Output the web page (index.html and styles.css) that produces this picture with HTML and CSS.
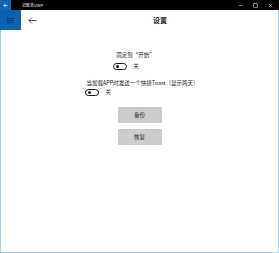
FILE: index.html
```html
<!DOCTYPE html>
<html lang="zh">
<head>
<meta charset="utf-8">
<title>记账本UWP</title>
<link rel="stylesheet" href="styles.css">
</head>
<body>
<div class="titlebar">
  <div class="tb-back">
    <svg width="5" height="5" viewBox="0 0 10 10"><path d="M9 5H1.5M5 1.5L1.5 5L5 8.5" stroke="#fff" stroke-width="1.4" fill="none"/></svg>
  </div>
  <div class="tb-title">记账本UWP</div>
  <div class="tb-controls">
    <svg width="5" height="5" viewBox="0 0 10 10"><path d="M1 5H9" stroke="#ddd" stroke-width="1"/></svg>
    <svg width="5" height="5" viewBox="0 0 10 10"><rect x="1.5" y="1.5" width="7" height="7" stroke="#ddd" stroke-width="1.2" fill="none"/></svg>
    <svg width="5" height="5" viewBox="0 0 10 10"><path d="M1.5 1.5L8.5 8.5M8.5 1.5L1.5 8.5" stroke="#ddd" stroke-width="1.2"/></svg>
  </div>
</div>
<div class="frame">
  <div class="header">
    <div class="hamburger">
      <svg width="7" height="5" viewBox="0 0 14 10"><path d="M0 1H14M0 5H14M0 9H14" stroke="#0b2a4a" stroke-width="1.4"/></svg>
    </div>
    <div class="back">
      <svg width="9" height="7" viewBox="0 0 18 14"><path d="M17 7H2M8 1L2 7L8 13" stroke="#222" stroke-width="1.5" fill="none"/></svg>
    </div>
    <div class="page-title">设置</div>
  </div>
  <div class="content">
    <div class="group group-1">
      <div class="label">固定到“开始”</div>
      <div class="toggle-row"><span class="toggle"><span class="knob"></span></span><span class="state">关</span></div>
    </div>
    <div class="group group-2">
      <div class="label">当加载APP时发送一个快捷Toast（显示两天）</div>
      <div class="toggle-row"><span class="toggle"><span class="knob"></span></span><span class="state">关</span></div>
    </div>
    <div class="buttons">
      <div class="btn">备份</div>
      <div class="btn">恢复</div>
    </div>
  </div>
</div>
</body>
</html>
```

FILE: styles.css
```css
html, body {
  margin: 0;
  padding: 0;
  background: #fff;
}
body {
  width: 279px;
  height: 253px;
  overflow: hidden;
  font-family: "Noto Sans CJK SC", "Noto Sans", sans-serif;
  color: #222;
}
.titlebar {
  height: 10px;
  background: #000;
  display: flex;
  align-items: center;
}
.tb-back {
  width: 11px;
  height: 10px;
  background: #1565b4;
  display: flex;
  align-items: center;
  justify-content: center;
}
.tb-title {
  margin-left: 11px;
  color: #fff;
  font-size: 4px;
  line-height: 10px;
  flex: 1;
}
.tb-controls {
  display: flex;
  gap: 10px;
  padding-right: 6px;
  align-items: center;
}
.tb-controls svg { display: block; }
.frame {
  height: 243px;
  box-sizing: border-box;
  border: 1px solid #a9cfec;
  border-top: none;
  display: flex;
  flex-direction: column;
}
.header {
  height: 20px;
  display: flex;
  align-items: center;
  margin-left: -1px;
}
.hamburger {
  width: 21px;
  height: 20px;
  background: #0c62b0;
  display: flex;
  align-items: center;
  justify-content: center;
}
.back {
  width: 22px;
  height: 20px;
  display: flex;
  align-items: center;
  justify-content: center;
}
.page-title {
  margin-left: 110px;
  font-size: 7px;
  font-weight: bold;
  line-height: 20px;
  color: #222;
}
.content {
  display: flex;
  flex-direction: column;
  align-items: center;
  padding-top: 22px;
}
.group {
  display: flex;
  flex-direction: column;
  align-items: flex-start;
}
.group-1 { margin-left: -11px; }
.group-1 .label { padding-left: 3px; }
.group-2 { margin-top: 10px; margin-left: 5px; }
.group-2 .label { padding-left: 1px; }
.label {
  font-size: 5.5px;
  line-height: 7px;
  white-space: nowrap;
}
.toggle-row {
  display: flex;
  align-items: center;
  gap: 6px;
  margin-top: 3px;
  height: 8px;
}
.group-2 .toggle-row { margin-top: 1px; }
.toggle {
  width: 14px;
  height: 7px;
  box-sizing: border-box;
  border: 1px solid #111;
  border-radius: 3.5px;
  display: flex;
  align-items: center;
  padding-left: 2px;
}
.knob {
  width: 3px;
  height: 3px;
  border-radius: 50%;
  background: #111;
}
.state {
  font-size: 5.5px;
  line-height: 7px;
}
.buttons {
  display: flex;
  flex-direction: column;
  gap: 6px;
  margin-top: 11px;
}
.btn {
  width: 44px;
  height: 16px;
  background: #cccccc;
  font-size: 5.5px;
  line-height: 16px;
  text-align: center;
  color: #222;
}
```
